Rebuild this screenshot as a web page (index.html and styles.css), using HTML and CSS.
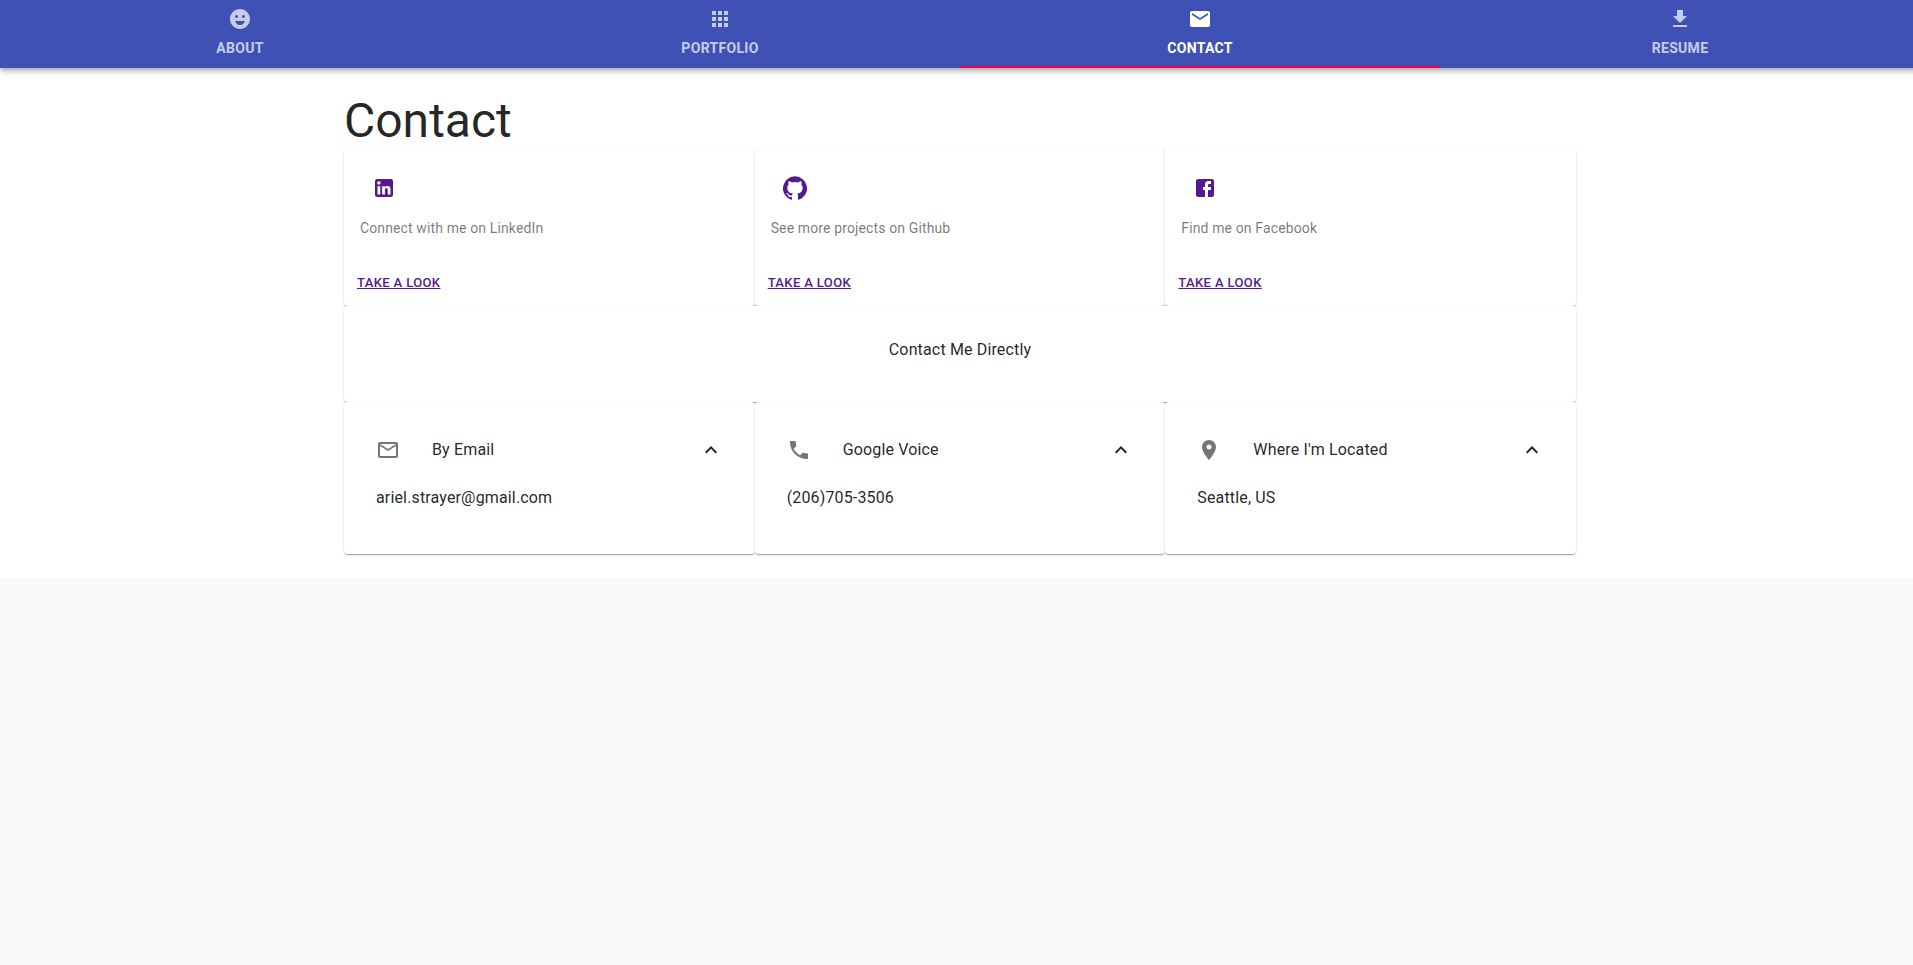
FILE: index.html
```html
<!DOCTYPE html>
<html lang="en">
<head>
<meta charset="utf-8">
<title>Contact</title>
<link rel="stylesheet" href="styles.css">
</head>
<body>
<div class="page">
  <header class="app-bar">
    <a class="tab"><svg class="icon" viewBox="0 0 24 24"><path d="M11.99 2C6.47 2 2 6.48 2 12s4.47 10 9.99 10C17.52 22 22 17.52 22 12S17.52 2 11.99 2zM8.5 8c.83 0 1.5.67 1.5 1.5S9.33 11 8.5 11 7 10.33 7 9.500 7.670 8 8.500 8zM12 18c-2.280 0-4.220-1.660-5-4h10c-.780 2.340-2.720 4-5 4zm3.500-7c-.83 0-1.500-.670-1.500-1.500S14.670 8 15.500 8s1.500.670 1.500 1.500-.670 1.500-1.500 1.500z"/></svg><span>About</span></a>
    <a class="tab"><svg class="icon" viewBox="0 0 24 24"><path d="M4 8h4V4H4v4zm6 12h4v-4h-4v4zm-6 0h4v-4H4v4zm0-6h4v-4H4v4zm6 0h4v-4h-4v4zm6-10v4h4V4h-4zm-6 4h4V4h-4v4zm6 6h4v-4h-4v4zm0 6h4v-4h-4v4z"/></svg><span>Portfolio</span></a>
    <a class="tab tab-selected"><svg class="icon" viewBox="0 0 24 24"><path d="M20 4H4c-1.100 0-1.990.900-1.990 2L2 18c0 1.100.900 2 2 2h16c1.100 0 2-.900 2-2V6c0-1.100-.900-2-2-2zm0 4l-8 5-8-5V6l8 5 8-5v2z"/></svg><span>Contact</span></a>
    <a class="tab"><svg class="icon" viewBox="0 0 24 24"><path d="M19 9h-4V3H9v6H5l7 7 7-7zM5 18v2h14v-2H5z"/></svg><span>Resume</span></a>
  </header>
  <main class="content">
    <div class="container">
      <h1 class="title">Contact</h1>
      <div class="row">
        <section class="card social">
          <a class="icon-button"><svg class="icon" viewBox="0 0 24 24"><path d="M19 3a2 2 0 0 1 2 2v14a2 2 0 0 1-2 2H5a2 2 0 0 1-2-2V5a2 2 0 0 1 2-2h14m-.5 15.500v-5.300a3.260 3.260 0 0 0-3.260-3.260c-.850 0-1.840.520-2.320 1.300v-1.110h-2.790v8.370h2.790v-4.930c0-.770.620-1.400 1.390-1.400a1.400 1.400 0 0 1 1.400 1.400v4.930h2.790M6.880 8.560a1.680 1.680 0 0 0 1.680-1.680c0-.930-.750-1.690-1.680-1.690a1.690 1.690 0 0 0-1.690 1.690c0 .930.760 1.680 1.690 1.680m1.390 9.940v-8.370H5.500v8.370h2.770z"/></svg></a>
          <p class="caption">Connect with me on LinkedIn</p>
          <a class="action">Take a look</a>
        </section>
        <section class="card social">
          <a class="icon-button"><svg class="icon" viewBox="0 0 24 24"><path d="M12 .3a12 12 0 0 0-3.8 23.4c.6.1.8-.3.8-.6v-2c-3.300.7-4-1.600-4-1.600-.6-1.400-1.400-1.800-1.400-1.800-1-.7.1-.7.1-.7 1.200 0 1.900 1.200 1.900 1.200 1 1.800 2.800 1.300 3.500 1 0-.8.4-1.300.7-1.600-2.700-.3-5.500-1.300-5.500-6 0-1.200.5-2.300 1.300-3.100-.2-.4-.6-1.600 0-3.200 0 0 1-.3 3.400 1.200a11.500 11.500 0 0 1 6 0c2.300-1.500 3.300-1.200 3.300-1.200.6 1.600.2 2.800 0 3.200.9.8 1.300 1.900 1.300 3.200 0 4.600-2.800 5.600-5.500 5.900.5.400.9 1 .9 2.200v3.300c0 .3.1.7.8.6A12 12 0 0 0 12 .3"/></svg></a>
          <p class="caption">See more projects on Github</p>
          <a class="action">Take a look</a>
        </section>
        <section class="card social">
          <a class="icon-button"><svg class="icon" viewBox="0 0 24 24"><path d="M5 3h14a2 2 0 0 1 2 2v14a2 2 0 0 1-2 2H5a2 2 0 0 1-2-2V5a2 2 0 0 1 2-2m13 2h-2.500A3.500 3.500 0 0 0 12 8.500V11h-2v3h2v7h3v-7h3v-3h-3V9a1 1 0 0 1 1-1h2V5z"/></svg></a>
          <p class="caption">Find me on Facebook</p>
          <a class="action">Take a look</a>
        </section>
      </div>
      <section class="card direct">Contact Me Directly</section>
      <div class="row">
        <section class="card detail">
          <div class="item"><svg class="icon item-icon" viewBox="0 0 24 24"><path d="M20 4H4c-1.100 0-1.990.900-1.990 2L2 18c0 1.100.900 2 2 2h16c1.100 0 2-.900 2-2V6c0-1.100-.900-2-2-2zm0 14H4V8l8 5 8-5v10zm-8-7L4 6h16l-8 5z"/></svg><span class="item-label">By Email</span><svg class="icon" viewBox="0 0 24 24"><path d="M12 8l-6 6 1.410 1.410L12 10.830l4.590 4.580L18 14z"/></svg></div>
          <div class="item">ariel.strayer@gmail.com</div>
        </section>
        <section class="card detail">
          <div class="item"><svg class="icon item-icon" viewBox="0 0 24 24"><path d="M21 15.460l-5.270-.610-2.520 2.520c-2.830-1.440-5.150-3.750-6.590-6.590l2.530-2.530L8.540 3H3.030C2.450 13.180 10.820 21.550 21 20.970v-5.510z"/></svg><span class="item-label">Google Voice</span><svg class="icon" viewBox="0 0 24 24"><path d="M12 8l-6 6 1.410 1.410L12 10.830l4.590 4.580L18 14z"/></svg></div>
          <div class="item">(206)705-3506</div>
        </section>
        <section class="card detail">
          <div class="item"><svg class="icon item-icon" viewBox="0 0 24 24"><path d="M12 2C8.130 2 5 5.130 5 9c0 5.250 7 13 7 13s7-7.750 7-13c0-3.870-3.130-7-7-7zm0 9.500c-1.380 0-2.500-1.120-2.500-2.500s1.120-2.500 2.500-2.500 2.500 1.120 2.500 2.500-1.120 2.500-2.500 2.500z"/></svg><span class="item-label">Where I'm Located</span><svg class="icon" viewBox="0 0 24 24"><path d="M12 8l-6 6 1.410 1.410L12 10.830l4.590 4.580L18 14z"/></svg></div>
          <div class="item">Seattle, US</div>
        </section>
      </div>
    </div>
  </main>
</div>
</body>
</html>
```
FILE: styles.css
```css
* { box-sizing: border-box; }
html { overflow: hidden; }
body {
  margin: 0;
  background: #fafafa;
  color: rgba(0, 0, 0, 0.87);
  font: 400 16px/24px Roboto, sans-serif;
  letter-spacing: 0.00938em;
}
.page { width: 1920px; }
.icon { display: block; width: 24px; height: 24px; fill: currentColor; flex: none; }
.app-bar {
  position: relative;
  display: grid;
  grid-template-columns: repeat(4, 1fr);
  height: 68px;
  background: #3f51b5;
  color: #fff;
  box-shadow: 0 2px 4px -1px rgba(0,0,0,.2), 0 4px 5px 0 rgba(0,0,0,.14), 0 1px 10px 0 rgba(0,0,0,.12);
}
.tab {
  display: flex;
  flex-direction: column;
  align-items: center;
  gap: 5px;
  padding-top: 7px;
  font-size: 14px;
  font-weight: 700;
  letter-spacing: 0.3px;
  text-transform: uppercase;
}
.tab > * { opacity: 0.7; }
.tab-selected { border-bottom: 2px solid #f50057; }
.tab-selected > * { opacity: 1; }
.content { background: #fff; padding: 24px 0; }
.container { width: 1280px; margin: 0 auto; padding: 0 24px; }
.title { height: 56px; margin: 0; font-size: 48px; font-weight: 400; line-height: 58px; letter-spacing: 0; }
.row { display: grid; grid-template-columns: repeat(3, 1fr); }
.card {
  background: #fff;
  border-radius: 4px;
  box-shadow: 0 2px 1px -1px rgba(0,0,0,.2), 0 1px 1px 0 rgba(0,0,0,.14), 0 1px 3px 0 rgba(0,0,0,.12);
}
/* Later cards cover the lower shadow of the row above */
.direct { position: relative; }
.social { height: 158px; padding: 16px; }
.icon-button { display: block; width: 48px; padding: 12px; color: #551a8b; }
.caption {
  margin: 6px 0 34px;
  color: rgba(0, 0, 0, 0.54);
  font-size: 14px;
  line-height: 20px;
  letter-spacing: 0.009em;
}
.action {
  display: block;
  margin-left: -3px;
  color: #551a8b;
  font-size: 13px;
  font-weight: 500;
  line-height: 22px;
  letter-spacing: 0.02857em;
  text-decoration: underline;
  text-transform: uppercase;
}
.direct { height: 95.75px; padding-top: 32px; text-align: center; }
.detail { height: 152.25px; padding: 24px 16px; position: relative; }
.item { display: flex; align-items: center; height: 48px; padding: 0 16px; }
.item-icon { margin-right: 32px; color: rgba(0, 0, 0, 0.54); }
.item-label { flex: 1; }
```
